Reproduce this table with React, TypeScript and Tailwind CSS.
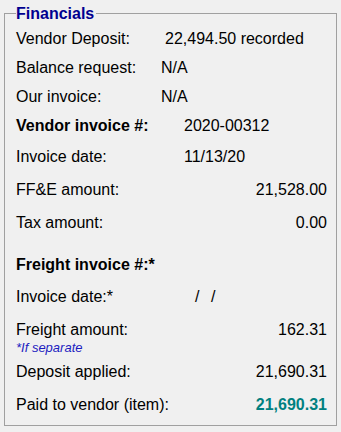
const font = { fontFamily: '"Liberation Sans", Arial, sans-serif' };

type RowProps = {
  label: string;
  bold?: boolean;
  h: string;
  children?: React.ReactNode;
};

function Row({ label, bold, h, children }: RowProps) {
  return (
    <div className={`flex items-start ${h}`}>
      <span className={`shrink-0 ${bold ? "font-bold" : ""}`}>{label}</span>
      {children}
    </div>
  );
}

function Pair({ label, value, w, h, bold }: { label: string; value: string; w: string; h: string; bold?: boolean }) {
  return (
    <div className={`flex items-start ${h}`}>
      <span className={`shrink-0 ${w} ${bold ? "font-bold" : ""}`}>{label}</span>
      <span>{value}</span>
    </div>
  );
}

function Amount({ label, value, h, accent }: { label: string; value: string; h: string; accent?: boolean }) {
  return (
    <div className={`flex items-start justify-between ${h}`}>
      <span>{label}</span>
      <span className={accent ? "font-bold text-[#008080]" : ""}>{value}</span>
    </div>
  );
}

export default function App() {
  return (
    <div className="min-h-[432px] w-[341px] bg-[#f0f0f0] pt-[4px] text-black" style={font}>
      <fieldset className="ml-[4px] box-border h-[422px] w-[333px] border border-[#a0a0a0] pb-[11px] pl-[11px] pr-[9px] pt-[7px] text-[16px] leading-[18px]">
        <legend className="pr-[2px] text-[16px] font-bold leading-[19px] text-[#000090]">Financials</legend>

        <Pair label="Vendor Deposit:" value="22,494.50 recorded" w="w-[149px]" h="h-[29px]" />
        <Pair label="Balance request:" value="N/A" w="w-[145px]" h="h-[29px]" />
        <Pair label="Our invoice:" value="N/A" w="w-[145px]" h="h-[29px]" />

        <Pair label="Vendor invoice #:" value="2020-00312" w="w-[168px]" h="h-[31px]" bold />
        <Pair label="Invoice date:" value="11/13/20" w="w-[168px]" h="h-[33px]" />
        <Amount label="FF&E amount:" value="21,528.00" h="h-[33px]" />
        <Amount label="Tax amount:" value="0.00" h="h-[42px]" />

        <Row label="Freight invoice #:*" bold h="h-[32px]" />
        <div className="flex h-[33px] items-start">
          <span className="w-[179px] shrink-0">Invoice date:*</span>
          <span className="inline-block w-[16px]">/</span>
          <span>/</span>
        </div>
        <Amount label="Freight amount:" value="162.31" h="h-[20px]" />
        <div className="h-[22px] text-[13px] italic leading-[14px] text-[#1c1cc0]">*If separate</div>
        <Amount label="Deposit applied:" value="21,690.31" h="h-[33px]" />
        <Amount label="Paid to vendor (item):" value="21,690.31" h="h-[18px]" accent />
      </fieldset>
    </div>
  );
}
